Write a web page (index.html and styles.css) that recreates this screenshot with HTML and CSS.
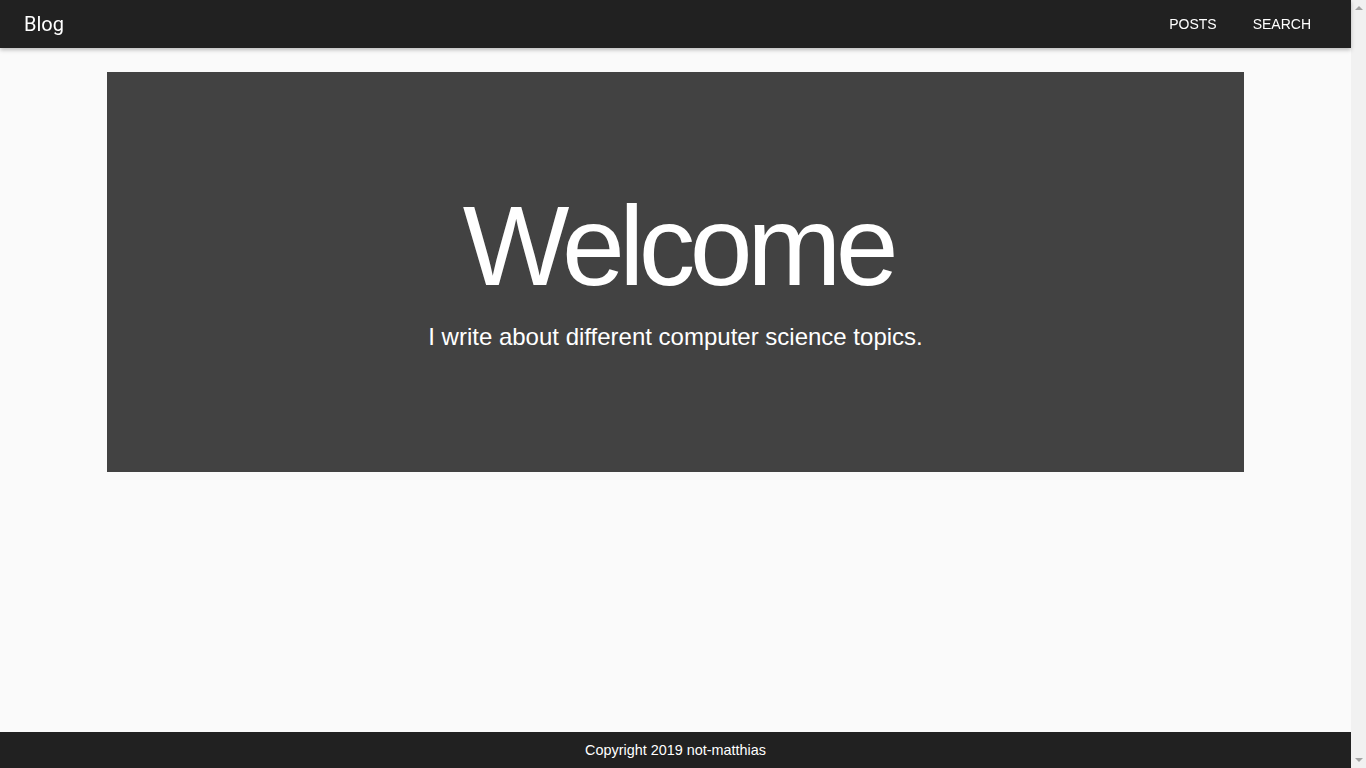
FILE: index.html
```html
<!DOCTYPE html>
<html lang="en">
<head>
<meta charset="utf-8">
<title>Blog</title>
<link rel="stylesheet" href="styles.css">
</head>
<body>
<div class="page">
  <header class="topbar">
    <a class="brand" href="#">Blog</a>
    <nav class="menu">
      <a href="#">POSTS</a>
      <a href="#">SEARCH</a>
    </nav>
  </header>
  <main class="content">
    <section class="hero">
      <h1 class="hero-title">Welcome</h1>
      <p class="hero-sub">I write about different computer science topics.</p>
    </section>
  </main>
  <footer class="footer">Copyright 2019 not-matthias</footer>
</div>
<div class="scrollbar" aria-hidden="true">
  <span class="arrow up"></span>
  <span class="arrow down"></span>
</div>
</body>
</html>
```
FILE: styles.css
```css
html {
  background: #f1f1f1;
}
body {
  margin: 0;
  font-family: "Liberation Sans", Arial, sans-serif;
}
.page {
  width: calc(100% - 15px);
  min-height: 100vh;
  display: flex;
  flex-direction: column;
  background: #fafafa;
}
.topbar {
  height: 48px;
  background: #212121;
  display: flex;
  align-items: center;
  justify-content: space-between;
  padding: 0 22px 0 24px;
  box-shadow: 0 2px 4px rgba(0,0,0,0.25);
  position: relative;
  z-index: 1;
}
.brand {
  color: #fff;
  text-decoration: none;
  font-family: Roboto, sans-serif;
  font-size: 20px;
}
.menu {
  display: flex;
}
.menu a {
  color: #fff;
  text-decoration: none;
  font-size: 14px;
  padding: 0 18px;
}
.content {
  flex: 1;
  padding-top: 24px;
}
.hero {
  width: 1137px;
  height: 400px;
  margin: 0 auto;
  background: #424242;
  color: #fff;
  display: flex;
  flex-direction: column;
  align-items: center;
  justify-content: center;
  box-sizing: border-box;
  padding-bottom: 4px;
}
.hero-title {
  margin: 0;
  font-weight: normal;
  font-size: 113px;
  letter-spacing: -5.5px;
  line-height: 1;
  padding-left: 5px;
}
.hero-sub {
  margin: 20px 0 0;
  font-size: 24px;
}
.footer {
  height: 36px;
  background: #212121;
  color: #fff;
  font-size: 14.4px;
  display: flex;
  align-items: center;
  justify-content: center;
}
.scrollbar {
  position: fixed;
  top: 0;
  right: 0;
  width: 15px;
  height: 100vh;
  background: #f1f1f1;
  display: flex;
  flex-direction: column;
  justify-content: space-between;
  align-items: center;
  padding: 6px 0;
  box-sizing: border-box;
}
.arrow {
  width: 0;
  height: 0;
  border-left: 4px solid transparent;
  border-right: 4px solid transparent;
}
.arrow.up {
  border-bottom: 4px solid #a3a3a3;
}
.arrow.down {
  border-top: 4px solid #a3a3a3;
}
```
